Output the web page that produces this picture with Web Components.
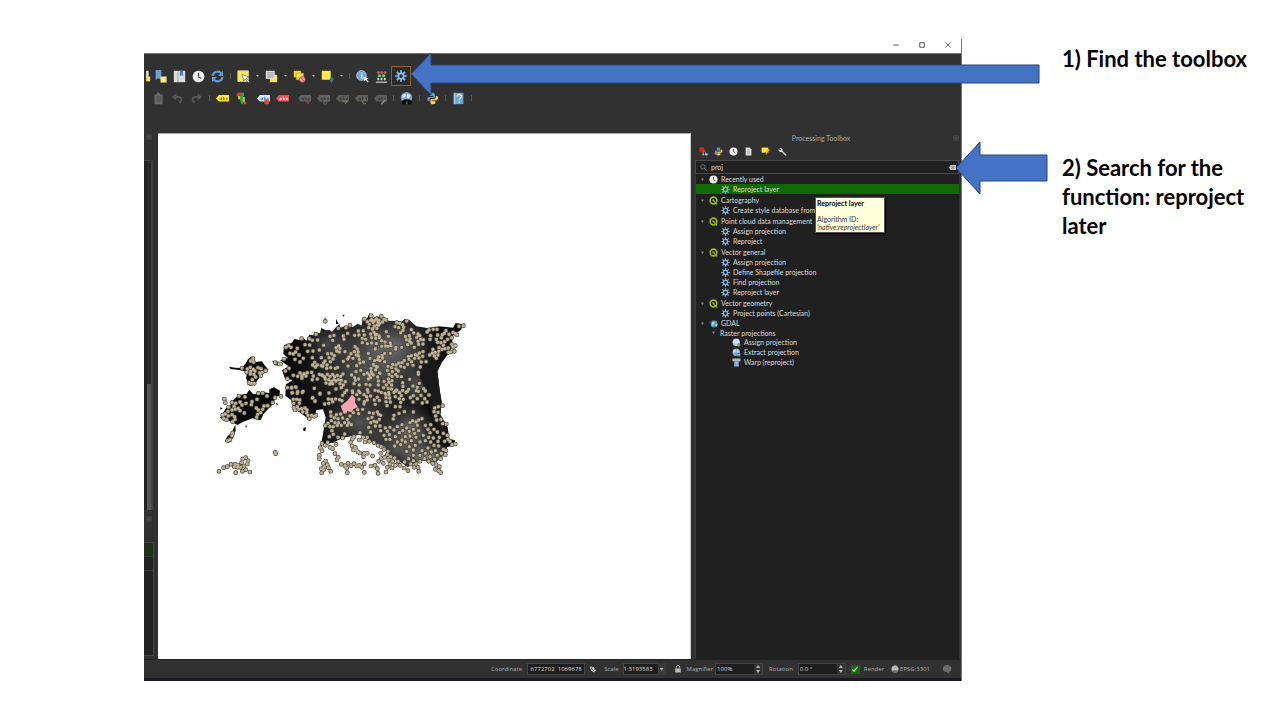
<!DOCTYPE html>
<html lang="en">
<head>
<meta charset="utf-8">
<title>Reprojecting a layer in QGIS</title>
<style>
html, body { margin: 0; background: #fff; }
body { font-family: "Open Sans", "Noto Sans", sans-serif; }
</style>
</head>
<body>
<tutorial-slide></tutorial-slide>
<script>
const GEAR = (c) => `<g stroke="${c}" stroke-width="2.2" fill="none"><circle cx="8" cy="8" r="3.6"/><path d="M8 4.6V.3M8 11.4v4.3M4.6 8H.3M11.4 8h4.300M5.600 5.600 2.500 2.500M10.400 10.400l3.100 3.100M10.400 5.600l3.100-3.100M5.600 10.400l-3.100 3.100"/></g>`;
const TAG = (fill, ink, extra = '') => `<path d="M0 8 3.500 3.700H16v8H3.500z" fill="${fill}"/><path d="M4.500 8.500a1 1 0 1 0 2 0 1 1 0 1 0-2 0M6.700 7v3M9 5.500v4.500M9 8.500a1 1 0 1 0 2 0 1 1 0 1 0-2 0M14.500 7.500h-1.500v2h1.500" fill="none" stroke="${ink}" stroke-width=".9"/>${extra}`;
const PYTHON = `<path d="M8 1C5 1 5 2 5 4v1h4v1H3C1 6 1 11 3 11h1.500V9c0-1 1-1.500 2-1.500h3c1 0 1.500-.5 1.500-1.500V3.500C11 1.500 10 1 8 1z" fill="#5a9bd5"/><path d="M8.500 15c3 0 3-1 3-3v-1h-4v-1H13c2.500 0 2.500-5 .5-5H12v2c0 1-1 1.500-2 1.500H7C6 8.500 5.500 9 5.500 10v2.500c0 2 1 2.500 3 2.500z" fill="#ffd83d"/>`;
const CLOCK = `<circle cx="8" cy="8" r="7.200" fill="#f0f0f0"/><path d="M8 3.500V8.500l3.500 2" fill="none" stroke="#444" stroke-width="1.500"/>`;
const SHAPES = {
  cut: `<path d="M10 1h3v9h-3z" fill="#ddd"/><path d="M10 8h5v6h-5z" fill="#f6d86b"/>`,
  bookmarkNew: `<path d="M2 0h7v12l-3.500-2L2 12z" fill="#6d9fd0"/><path d="M8 8h7.500v7.500H8z" fill="#ffe278"/><circle cx="11.700" cy="11.700" r="1.500" fill="#fff"/>`,
  book: `<path d="M1 1h14v14H1z" fill="#dcdcdc"/><path d="M6 1v14" stroke="#999"/><path d="M8.500 1h4v7l-2-1.500-2 1.500z" fill="#5683b4"/>`,
  clock: CLOCK,
  refresh: `<path d="M2 7.500A6 5.500 0 0 1 12.500 4M14 8.500A6 5.500 0 0 1 3.500 12" fill="none" stroke="#5c9bd8" stroke-width="2.800"/><path d="M14.800 1v6.300H8.500zM1.200 15V8.700h6.300z" fill="#5c9bd8"/>`,
  select: `<path d="M1 1h13v13H1z" fill="#ffe94a" stroke="#d9d9b0"/><path d="M6 5.500 14.500 8.500l-3 1.500 4 4.500-1.500 1-4-4.500-1.500 2.500z" fill="#fff" stroke="#555" stroke-width=".7"/>`,
  selectForm: `<path d="M6 6h9v9H6z" fill="#ffe94a"/><path d="M1 1h11v10H1z" fill="#ddd"/><path d="M2.500 3.500h8M2.500 6h8M2.500 8.500h8" stroke="#888"/>`,
  deselect: `<path d="M1 1h9v8H1z" fill="#f3d437"/><path d="M4 4h9v8H4z" fill="#ffe94a" stroke="#a98f20" stroke-width=".6"/><circle cx="11.500" cy="11.500" r="3.500" fill="#e9aaa6" stroke="#d94545" stroke-width="1.200"/><path d="m9.300 9.300 4.400 4.400" stroke="#d94545"/>`,
  selectLoc: `<path d="M1 1h11v11H1z" fill="#ffe94a"/><path d="M13 16c-2-3-2.500-3.500-2.500-4.700a2.500 2.500 0 0 1 5 0c0 1.200-.5 1.700-2.500 4.700z" fill="#4c7185"/>`,
  info: `<circle cx="6.800" cy="6.800" r="6.200" fill="#6fa6dc" stroke="#b9d4ec" stroke-width=".7"/><path d="M7 3v1.300M7 5.600v5" stroke="#fff" stroke-width="1.600"/><path d="m9 8 6.500 2.500-2.500 1 2.500 3-1 1-3-3.300-1.200 2z" fill="#fff"/>`,
  abacus: `<path d="M1 15h14" stroke="#ccc" stroke-width="1.500"/><path d="M1 3h14M2 7h12M2 11h12" stroke="#888" stroke-width=".6"/><path d="M3 1.500h2.500v3H3zM7 1.500h2.500v3H7zM11 1.500h2.500v3H11z" fill="#e25b5b"/><path d="M4 5.500h3v3H4zM9 5.500h3v3H9z" fill="#79db76"/><path d="M3 9.500h2v3H3zM7 9.500h2v3H7zM11 9.500h2v3h-2z" fill="#ddd"/>`,
  gear: GEAR('#8fc0ef'),
  gearSmall: GEAR('#87b0df'),
  paste: `<path d="M3 3h10v12H3zM6 1h4v3H6z" fill="#686868"/><path d="M5 6h6M5 8.500h6M5 11h6" stroke="#444"/>`,
  undo: `<path d="M3 6h6c5 0 5 6 1 7" fill="none" stroke="#5c5653" stroke-width="2"/><path d="M6.500 1.500v9L1 6z" fill="#5c5653"/>`,
  redo: `<path d="M13 6H7c-5 0-5 6-1 7" fill="none" stroke="#55595a" stroke-width="2"/><path d="M9.500 1.500v9L15 6z" fill="#55595a"/>`,
  label: TAG('#ffe83d', '#7a6d10'),
  diagram: `<path d="M2 4c0-4 5-4 6-2l-1 5H4z" fill="#e33"/><path d="M4 5h3v4H4z" fill="#efd62e"/><path d="M6 5h4v10H8l-2-5z" fill="#2fae3d"/><path d="M10 6h2v7h-2z" fill="#efd62e"/><path d="M11 12h3v3h-3z" fill="#e33"/><path d="M7 1h4v4H8z" fill="#3aa845"/>`,
  labelPin: TAG('#d6e9fb', '#4878aa', '<circle cx="12" cy="12" r="3.200" fill="#df4540"/>'),
  labelRed: TAG('#f6494d', '#fff'),
  tagPin: TAG('#646464', '#383838', '<circle cx="12" cy="12" r="2.500" fill="#6a4d4c"/>'),
  tagShow: TAG('#646460', '#383838', '<circle cx="10" cy="13" r="2" fill="none" stroke="#777"/>'),
  tagMove: TAG('#5e5e5a', '#383838', '<path d="M8 12h5m-2-2.500 3 2.500-3 2.500" fill="none" stroke="#909090"/>'),
  tagRotate: TAG('#5e5e5a', '#383838', '<path d="M13.500 10a2.500 2.500 0 1 0 0 4" fill="none" stroke="#909090"/>'),
  tagEdit: TAG('#5e5e5a', '#383838', '<path d="m9 15 5-5" stroke="#858585" stroke-width="2"/>'),
  metasearch: `<circle cx="8" cy="7" r="7" fill="#7fa4ca"/><path d="M3 4c3-3 5-1 4 1S4 8 3 7M9 2l4 2-2 4-3-1z" fill="#dce8f3"/><circle cx="5" cy="12.500" r="2.800" fill="#050505"/><circle cx="12" cy="12.500" r="2.800" fill="#050505"/><path d="M5 9h7v3H5z" fill="#111"/>`,
  python: PYTHON,
  help: `<path d="M3 1h11v14H3z" fill="#69a5dc"/><path d="M2 1h2v14H2z" fill="#aacdea"/><path d="M6.500 5.500c0-3 5-3 5 0 0 2-2.500 2-2.500 4.500M9 11.500v1.800" fill="none" stroke="#fff" stroke-width="1.400"/>`,
  models: `<circle cx="5" cy="5" r="4.800" fill="#d8201f"/><path d="M7 7l3-1 3 7M8 12v-4" stroke="#aaa" fill="none"/><circle cx="13" cy="13" r="2.500" fill="#9bbbd6"/><circle cx="7.500" cy="13" r="2" fill="#bbb"/>`,
  pythonGear: PYTHON + `<circle cx="4" cy="11" r="3" fill="#7094ba"/>`,
  results: `<path d="M3 1h7l3 3v11H3z" fill="#eee"/><path d="M5 5h6M5 7.500h6M5 10h6M5 12.500h6" stroke="#888"/>`,
  inPlace: `<path d="M1 1h12v9H1z" fill="#ffe53c"/><path d="m8 14 1-4 5-7 1.800 1.500-5 7z" fill="#ffd23a" stroke="#67531c" stroke-width=".7"/>`,
  wrench: `<path d="M2 2.500a4 4 0 0 1 6 4.500l7 6.500-2 2-6.500-7A4 4 0 0 1 1 4l3 2 1.500-1.500z" fill="#eee"/><path d="m9 9 5.500 5.500" stroke="#e4b640" stroke-width="1.500"/>`,
  search: `<circle cx="6.500" cy="6.500" r="5" fill="none" stroke="#9a9a9a" stroke-width="1.500"/><path d="m10 10 5 5" stroke="#9a9a9a" stroke-width="1.800"/>`,
  clear: `<path d="m0 8 4-5.500h12v11H4z" fill="#c6c6c6"/><path d="m6 5 6 6m0-6-6 6" stroke="#555" stroke-width="1.500"/>`,
  caret: `<path d="M3 5h10l-5 8z" fill="#828282"/>`,
  qgis: `<circle cx="8" cy="8" r="6" fill="none" stroke="#93bd1e" stroke-width="2.800"/><path d="m9 8 6.500 6-2.500 1.500L8 10z" fill="#7fb52a"/><path d="M6 6h3.500L8.800 7l1.500 1.700L9 10 7.200 8.500 6 9.500z" fill="#ee9a33"/>`,
  gdal: `<circle cx="9" cy="9" r="6.200" fill="#3f9dbb"/><path d="M6 5c4-2 5 1 3 3s0 3-2 4-3-5-1-7M12 8l3 1-1 4-3-1z" fill="#bfe0c8"/><path d="M0 5 8 1l-1 3-5 4z" fill="#444"/>`,
  globeAdd: `<circle cx="7.500" cy="7.500" r="6.500" fill="#b9d5e8"/><path d="M3 4c3-3 5 0 3 2s-3 3-4 1M9 2l4 5-4 1z" fill="#eaf4fa"/><path d="M9 12.500h6M12 9.500v6" stroke="#6fae58" stroke-width="2.500"/>`,
  globeGet: `<circle cx="7.500" cy="7.500" r="6.500" fill="#8baed6"/><path d="M3 4c3-3 5 0 3 2s-3 3-4 1M9 2l4 5-4 1z" fill="#dce9f8"/><path d="M8 9h7v6H8z" fill="#4779ba"/><path d="M9 12h5" stroke="#fff"/>`,
  warp: `<path d="M1 1h14v5H1z" fill="#c9d6df"/><path d="M2 3.500h12" stroke="#66747e"/><path d="M3.500 6h9c-1 3-1 5 0 9h-9c1-4 1-6 0-9z" fill="#93b7d2"/>`,
  extents: `<path d="m1 3 8 1 5 7-4 4-6-4z" fill="#c9c9c9"/><path d="m3 5 8 8M7 4l-3 6m8-2-5 5" stroke="#333"/>`,
  lock: `<path d="M4.500 7V4.500a3.500 3.500 0 0 1 7 0V7" fill="none" stroke="#bbb" stroke-width="1.800"/><path d="M2.500 7h11v8h-11z" fill="#bbb"/>`,
  crs: `<circle cx="8" cy="8" r="7" fill="#aaa"/><path d="M1 8h14M8 1c-5 4-5 10 0 14M8 1c5 4 5 10 0 14" fill="none" stroke="#ddd"/><path d="M2 11h12l-3 4H5z" fill="#666"/>`,
  bubble: `<path d="M8 1.500c9 0 9 10 3 11l1 3-4-2.500c-9 0-9-11.500 0-11.500z" fill="#6b6b6b"/>`,
  dock: `<path d="M2 2h12v12H2zM5 5h6v6H5zM5 5l6 6M11 5l-6 6" fill="none" stroke="#595959" stroke-width="1.500"/>`,
  minimise: `<path d="M1 8h14" stroke="#222" stroke-width="2"/>`,
  maximise: `<path d="M2 2h12v12H2z" fill="none" stroke="#222" stroke-width="2"/>`,
  close: `<path d="m1 1 14 14M15 1 1 15" stroke="#222" stroke-width="1.800"/>`
};

/* Base class: puts the markup returned by render() in an open shadow root. */
class View extends HTMLElement {
  connectedCallback() {
    if (!this.shadowRoot) this.attachShadow({ mode: 'open' });
    const t = document.createElement('template');
    t.innerHTML = this.render();
    this.shadowRoot.replaceChildren(t.content.cloneNode(true));
  }
}

customElements.define('q-icon', class extends View {
  render() {
    return `<style>:host{display:block;flex:none;width:var(--size,12px);height:var(--size,12px)}svg{display:block;width:100%;height:100%}</style>
      <svg viewBox="0 0 16 16" aria-hidden="true">${SHAPES[this.getAttribute('name')]}</svg>`;
  }
});

customElements.define('tool-button', class extends View {
  render() {
    const n = this.getAttribute('icon');
    return `<style>
      :host{display:block;flex:none;width:19px;height:20px}
      :host([narrow]){width:7px}
      :host([active]){width:20px}
      button{display:flex;align-items:center;justify-content:center;width:100%;height:100%;padding:0;margin:0;border:0;background:none;overflow:hidden;box-sizing:border-box;--size:13px}
      :host([narrow]) button{justify-content:flex-end}
      :host([active]) button{border:1px solid #94602a;background:#2b2b2b;--size:12px}
      :host([small]){width:15px;height:12px}
      :host([small]) button{--size:9px}
    </style><button type="button" aria-label="${n}"><q-icon name="${n}"></q-icon></button>`;
  }
});

customElements.define('tool-drop', class extends View {
  render() {
    return `<style>:host{display:block;flex:none;width:9px}button{display:flex;align-items:center;justify-content:center;width:100%;height:12px;border:0;padding:0;background:none}i{width:3px;height:2px;background:#bbb;clip-path:polygon(0 0,100% 0,50% 100%)}</style><button type="button" aria-label="more"><i></i></button>`;
  }
});

customElements.define('tool-sep', class extends View {
  render() {
    return `<style>:host{display:flex;flex:none;width:7px;justify-content:center}:host([thin]){width:3px;visibility:hidden}i{width:1px;height:6px;background:#565656}</style><i></i>`;
  }
});

customElements.define('title-bar', class extends View {
  render() {
    return `<style>:host{display:flex;justify-content:flex-end;height:14px;background:#fff;border-bottom:1px solid #777}
      button{width:26px;height:12px;padding:0;border:0;background:none;display:flex;align-items:center;justify-content:center;--size:6px}</style>
      ${['minimise', 'maximise', 'close'].map(n => `<button type="button" aria-label="${n}"><q-icon name="${n}"></q-icon></button>`).join('')}`;
  }
});

customElements.define('tool-bars', class extends View {
  render() {
    const b = (...names) => names.map(n => `<tool-button icon="${n}"></tool-button>`).join('');
    const s = '<tool-sep></tool-sep>', d = '<tool-drop></tool-drop>', thin = '<tool-sep thin></tool-sep>';
    return `<style>:host{display:block;height:67px;padding-top:12px;box-sizing:content-box}
      div{display:flex;align-items:center;height:20px}div+div{margin-top:2px;padding-left:5px}</style>
      <div><tool-button narrow icon="cut"></tool-button>${b('bookmarkNew', 'book', 'clock', 'refresh')}${s}${b('select')}${d}${b('selectForm')}${d}${b('deselect')}${d}${b('selectLoc')}${d}${s}${b('info', 'abacus')}<tool-button active icon="gear"></tool-button></div>
      <div>${b('paste', 'undo', 'redo')}${s}${b('label', 'diagram')}${thin}${b('labelPin', 'labelRed')}${thin}${b('tagPin', 'tagShow', 'tagMove', 'tagRotate', 'tagEdit')}${s}${b('metasearch')}${s}${b('python')}${s}${b('help')}${s}</div>`;
  }
});

customElements.define('side-docks', class extends View {
  render() {
    return `<style>:host{display:flex;flex-direction:column;flex:none;width:14px;--size:6px}
      header{height:27px;padding:1px 0 0 2px;box-sizing:border-box}
      .tree{flex:352;display:flex;background:#222;width:9px;border-right:2px solid #424242;border-top:1px solid #444;padding-left:2px;box-sizing:border-box}
      .bar{width:4px;margin-left:auto;background:#2a2a2a;display:flex;align-items:flex-end}
      .bar i{flex:1;height:36%;background:#565656}
      .mid{padding-top:6px;height:32px}
      .list{flex:113;width:9px;background:#222;border:1px solid #454545;border-left:0;margin-bottom:3px}
      .list i{display:block;height:13px;border-bottom:1px solid #3a3a3a}.list i:first-child{background:#1e3019}
    </style><header><q-icon name="dock"></q-icon></header><div class="tree"><div class="bar"><i></i></div></div>
    <header class="mid"><q-icon name="dock"></q-icon></header><div class="list"><i></i><i></i></div>`;
  }
});

/* Sample points as x,y pairs, each area with its own origin. */
const STATIONS = [
  [210, 15, '136,49 65,101 18,127 26,122 33,127 12,162 30,145 40,147 52,130 47,141 57,150 45,163 60,171 70,160 75,119 89,120 83,139 88,101 97,106 113,105 108,88 118,135 131,121 99,138 97,158 16,198 27,190 22,221 40,211 53,214 60,204 66,213 72,206 78,213 66,220 82,203 95,202 100,213 97,224 2,177 104,172 112,180 98,180 106,186 124,182 131,174 118,208 128,212 136,222 112,222 150,94 162,91 158,106 175,70 198,68 210,61 190,93 203,85 192,103 224,91 235,78 250,77 237,90 247,100 253,42 262,50 268,58 274,33 275,44 283,48 290,42 297,46 266,68 278,72 291,70 296,60 253,90 257,103 275,98 286,90 298,98 247,113 262,116 275,114 289,116 286,132 225,125 232,132 223,140 235,141 213,146 229,150 236,153 219,160 238,163 207,156 204,183 176,122 168,128 180,130 170,138 178,141 143,146 155,146 163,152 147,158 159,162 135,168 151,170 141,180 124,158 128,184 140,190 152,188 166,190 173,187 190,169 195,140 203,162 126,210 134,216 142,208 150,214 158,208 164,215 172,211 146,224 154,229 162,224 138,234 149,237 158,236 168,228 175,224 182,214 184,226 189,207 196,230 180,236 190,240 184,248 200,256 215,210 224,218 228,200 240,174 230,182 242,196 226,226 236,222 222,236 238,240 251,171 252,208 262,204 268,210 272,218 265,222 274,200 280,210 293,216 299,204 258,238 270,240 262,254 236,258 35,249 47,246 53,260 36,264 67,262 103,250 120,265 147,264 217,258 168,252 285,256 295,240 292,186 280,180 270,160 265,145 295,155'],
  [480, 15, '3,32 2,46 9,52 18,43 24,50 13,63 22,60 34,34 42,43 48,45 38,51 29,55 7,72 12,82 20,88 2,87 49,80 55,94 28,93 17,100 16,131 35,107 45,111 61,114 35,124 46,123 54,124 63,122 78,127 95,127 77,133 61,145 44,145 36,151 38,159 27,156 23,164 30,167 44,170 14,167 10,178 18,184 3,190 17,194 6,206 30,205 25,228 110,48 98,59 89,55 80,53 75,65 86,68 101,67 99,76 92,83 124,74 131,84 106,94 118,92 120,101 109,104 118,109 113,119 124,114 133,127 144,87 140,97 149,92 152,103 144,109 160,104 146,118 159,117 171,81 177,75 182,92 180,103 190,73 201,73 203,90 199,103 203,112 214,98 217,89 228,77 223,85 237,88 245,98 233,103 224,110 213,113 220,121 207,128 216,133 225,131 235,129 245,118 257,86 249,82 267,64 280,62 261,90 256,122 249,126 253,139 242,141 235,142 206,139 196,142 189,133 187,144 193,153 204,150 179,150 199,160 159,140 148,144 141,151 147,159 158,154 136,149 134,160 124,152 115,154 103,166 117,163 125,170 113,178 129,181 103,187 92,184 86,174 78,180 96,173 68,178 54,184 65,188 52,196 67,200 78,192 85,198 77,208 57,208 66,214 82,214 94,215 55,222 42,229 57,232 66,227 65,240 49,240 41,248 55,250 65,252 98,233 99,244 119,223 145,208 145,202 154,171 168,170 151,186 148,235 129,243 142,247 161,251 139,257 108,262 116,253 98,256 89,263 80,255 72,262 56,262 34,262 47,268'],
  [300, 270, '8,23 15,34 30,12 55,27 56,40 44,42 65,28 68,35 77,27 89,29 98,16 104,8 96,32 128,8 140,14 150,8 162,14 174,6 170,20 182,18 147,28 163,35 172,30 162,42 143,59 158,58 146,71 205,3 193,30 202,22 208,31 196,43 225,10 237,14 228,23 239,24 228,35 241,36 231,47 257,3 256,20 268,8 274,17 268,26 280,28 272,37 256,50 270,50 292,4 310,17 301,23 309,36 325,4 333,16 322,26 337,39 344,26 351,36 346,3 357,15 385,50 398,47 374,54 372,65 384,67 377,78 393,88 380,90 398,101 409,102 310,66 283,65 267,70 252,76 250,87 206,73 178,68 190,70 202,66 212,76 186,82 174,86 192,94 182,98 200,96 208,88 210,108 196,108 212,122 182,126 172,142 176,112 62,66 63,78 73,83 79,74 92,72 84,86 98,84 75,98 86,98 64,92 54,100 46,107 60,110 70,110 82,106 94,106 104,98 112,88 116,98 124,104 112,106 120,78 130,68 106,66 66,122 70,133 58,140 84,142 98,144 104,132 132,140 150,128 226,114 240,112 232,124 222,136 238,134 228,148 240,148 252,120 262,110 276,104 268,128 256,140 278,122 290,114 300,98 308,92 318,96 326,90 336,86 322,106 298,124 310,118 314,130 300,138 286,140 326,122 346,106 354,118 362,104 340,136 360,128 372,118 382,126 356,142 370,144 276,150 262,156 272,164 254,168 286,156 304,152 318,142 330,156 316,166 298,170 290,184 310,180 346,152 362,156 372,166 354,174 384,154 388,142 400,130 412,136 414,148 420,154 404,154 386,168 400,178 408,182 394,190 406,194 376,182 364,186 382,196 392,206 374,208 360,200 346,190 336,182 330,196 344,206 356,214 368,220 378,224 388,230 386,242 392,248 376,238 436,162 426,164 330,214 318,222 310,212 302,222 312,232 324,232 326,244 294,242 282,234 270,226 284,216 296,206 310,196 264,214 254,204 242,200 232,194 224,202 236,210 248,214 256,226 246,234 232,232 228,246 240,222 214,206 206,214 220,220 212,190 222,178 234,184 195,226 202,236 204,250 183,228 188,198 172,190 163,190 160,200 150,189 139,180 130,180 126,168 122,157 136,172 144,186 148,150 165,156 160,142 178,154 192,158 204,166 214,170 53,157 46,166 36,160 31,173 36,182 28,196 28,206 60,172 68,176 75,191 85,202 81,209 78,163 127,147 47,213 40,220 52,224 43,230 34,236 55,233 62,244 41,240 35,249 94,223 105,227 114,220 110,234 123,227 132,221 140,228 148,226 155,232 163,221 112,248 163,247'],
  [0, 120, '129,56 122,63 131,66 96,84 112,87 121,82 130,88 110,97 122,94 135,93 144,83 153,86 149,99 132,103 121,102 157,97 167,92 152,107 137,111 127,119 117,128 124,131 133,130 196,68 208,72 87,168 105,171 145,160 158,159 171,168 141,178 126,185 124,194 139,204 145,210 152,218 143,223 140,232 158,208 162,198 173,197 188,188 195,173 213,169 43,177 46,188 66,187 77,190 90,186 96,195 108,190 72,199 56,201 66,210 54,214 76,208 85,205 90,212 103,219 38,225 46,222 41,235 50,239 55,228 66,224 74,230 68,245 75,238 68,279 66,287 60,299 53,302 196,337 197,341 27,394 41,383 52,380 63,373 75,373 84,375 95,368 98,357 107,353 114,362 112,372 102,378 92,382 83,382 73,381 97,394 107,389 120,396 77,398 232,143 245,142 258,142 247,158 262,160 279,154 313,145 307,174 315,183 250,178 260,178 269,180 251,190 268,190 252,203 262,200 255,210 266,208 275,206 285,204 291,210 278,216 290,218 294,226 305,226 298,236 313,229 318,226']
];

customElements.define('map-canvas', class extends View {
  render() {
    const dots = STATIONS.map(([ox, oy, list]) => list.split(' ').map(pair => {
      const [x, y] = pair.split(',').map(Number);
      return `M${x + ox} ${y + oy}h.01`;
    }).join('')).join('');
    const land = 'M222 135l23-6 8-12 15 3 6-9 16 11 8-18 12 2 3-9 17 3 4-16 14 7 11-1 7 6 12-14 10-10 3 11 18-6 20 4 14-10 12 6 3-24 8 12 13-26 4 18 17-8 10 2 8 9 16 2 18 1 18 6 14-12 15 4 20 18 32 5 36-5 22 2 20 2 8-14 22 4-6 17-14 8-13 12 2 26-9 20-25 34-12 24 7 56 6 36-4 38 22 38 5 36 16 2 3 14-26 8-12 26-20 18-50-4-36 20-18-14-36-20-14-28-44-16-32-20-50 9-30 15-36 4 6-30 8-50-8-24-20 2-4 18-22 7-22-17-20-10-8-28-17-13 2-34 20-12-24-8-8-22 20-12-26-18 24-7-14-12z';
    return `<style>:host{display:block;flex:1;min-width:0;background:#fff;border-top:1px solid #aaa;border-right:1px solid #ccc;box-sizing:border-box;padding:166px 0 0 52px;overflow:hidden}svg{display:block;width:270px;height:185px}</style>
    <svg viewBox="0 0 810 555" role="img" aria-label="Map of Estonia with sample points">
      <defs><radialGradient id="g"><stop offset="0" stop-color="#aaa" stop-opacity=".8"/><stop offset="1" stop-color="#777" stop-opacity="0"/></radialGradient>
      <clipPath id="c"><path d="${land}"/></clipPath></defs>
      <path d="${land}" fill="#0d0d0d"/>
      <g clip-path="url(#c)" fill="url(#g)"><ellipse cx="500" cy="150" rx="220" ry="170" opacity=".5"/><ellipse cx="560" cy="140" rx="100" ry="100" opacity=".5"/><ellipse cx="480" cy="230" rx="220" ry="150" opacity=".4"/><ellipse cx="600" cy="390" rx="80" ry="90" opacity=".8"/><ellipse cx="450" cy="370" rx="140" ry="100" opacity=".55"/><ellipse cx="655" cy="475" rx="90" ry="50"/><ellipse cx="560" cy="450" rx="160" ry="90" opacity=".5"/><ellipse cx="620" cy="260" rx="45" ry="60" opacity=".5"/><ellipse cx="350" cy="130" rx="80" ry="60" opacity=".35"/><path d="M630 190h80v230l-40-60-15-70-25-60z" fill="#1a1a1a"/></g>
      <g fill="#0b0b0b"><path d="M57 200l18 3 22 1 10-14 7-12 10-9 12 17 20-2 8 12 12 14-14 9-14 14-16 22-14 2-10-24 4-18-30-6-20-2z"/>
      <path d="M178 268l14-6 18 10-2 16-18 4-12-12zM186 182l24 4 6 12-22-2z"/>
      <path d="M30 354l18-30 10-4 12-20 14-14 26-5 8-12 12 14 28-7 24 4 12 15-2 14-18 18-14 16-8 18-24-6-28 10-18 10-22-12z"/>
      <path d="M76 374l1 18-8 22-12 14-12-4 6-14 14-12 6-14zM280 384l8-2-2 12-6-2zM106 376l5 2-3 6zM197 308l8 4-4 4zM240 202l30 20-40 6zM30 322l8 3-6 4zM398 43l6 4-5 3zM212 120l5 3zM345 50l3 10h-5zM378 56l8 16h-8z"/></g>
      <path d="M374 430l24-14 36 8 34 8 30 20 26 26-14 12-40-4-34-14-10-20-30-10z" fill="#fff"/>
      <path d="${dots}" fill="none" stroke="#4a453a" stroke-width="14" stroke-linecap="round"/>
      <path d="${dots}" fill="none" stroke="#bcb196" stroke-width="10" stroke-linecap="round"/>
      <path d="M392 318l20-16 14-18 10 10-1 14 9 14-14 5-5 10-13-4-11 8z" fill="#f5a4b2"/>
    </svg>`;
  }
});

const TREE = [
  ['clock', 'Recently used', ['Reproject layer']],
  ['qgis', 'Cartography', ['Create style database from project']],
  ['qgis', 'Point cloud data management', ['Assign projection', 'Reproject']],
  ['qgis', 'Vector general', ['Assign projection', 'Define Shapefile projection', 'Find projection', 'Reproject layer']],
  ['qgis', 'Vector geometry', ['Project points (Cartesian)']]
];

customElements.define('algorithm-tip', class extends View {
  render() {
    return `<style>:host{display:block;background:#ffffdc;color:#333;border:1px solid #555;box-shadow:1px 1px 1px #000;padding:1px;font:7px/8px Lato,sans-serif;white-space:nowrap;box-sizing:border-box}
      b,p,em{display:block;margin:0}b{color:#000;margin-bottom:8px}</style>
      <b>Reproject layer</b><p>Algorithm ID:</p><em>'native:reprojectlayer'</em>`;
  }
});

customElements.define('algorithm-tree', class extends View {
  render() {
    const item = (icon, t) => `<li class="row item"><q-icon name="${icon}"></q-icon><span>${t}</span></li>`;
    const head = (icon, t) => `<div class="row"><q-icon class="caret" name="caret"></q-icon><q-icon name="${icon}"></q-icon><span>${t}</span></div>`;
    return `<style>:host{display:block;flex:1;background:#202020;color:#ddd;font:7px/10px Lato,sans-serif;position:relative;border-left:1px solid #3c3c3c}
      ul{list-style:none;margin:0;padding:0}
      .row{display:flex;align-items:center;height:10px;gap:3px;padding-left:4px;--size:9px;white-space:nowrap}
      .caret{--size:5px;margin-right:1px}
      .group+.group{margin-top:1px}
      .group:last-child{margin-top:0}
      .item{padding-left:25px}
      .group:first-child .item{background:#0f6b00}
      .sub .row{padding-left:15px}.sub .row.item{padding-left:36px}.sub>.row{height:9px}
      algorithm-tip{position:absolute;left:119px;top:23px;z-index:1;width:70px;height:36px}
    </style><ul>
      ${TREE.map(([i, t, kids]) => `<li class="group">${head(i, t)}<ul>${kids.map(k => item('gearSmall', k)).join('')}</ul></li>`).join('')}
      <li class="group">${head('gdal', 'GDAL')}<div class="sub"><div class="row"><q-icon class="caret" name="caret"></q-icon><span>Raster projections</span></div>
      <ul>${item('globeAdd', 'Assign projection')}${item('globeGet', 'Extract projection')}${item('warp', 'Warp (reproject)')}</ul></div></li>
    </ul><algorithm-tip></algorithm-tip>`;
  }
});

customElements.define('processing-toolbox', class extends View {
  render() {
    const b = n => `<tool-button small icon="${n}"></tool-button>`;
    return `<style>:host{display:flex;flex-direction:column;flex:none;width:270px;box-sizing:border-box;padding:0 2px 0 4px;color:#aaa}
      header{display:flex;align-items:center;height:10px;font:7px/10px Lato,sans-serif;--size:6px}
      h2{flex:1;margin:0 6px 0 0;text-align:center;font:inherit}
      nav{display:flex;align-items:center;height:16px;padding-left:1px}
      tool-sep{width:2px;visibility:hidden}
      .find{display:flex;align-items:center;gap:4px;height:12px;padding:0 2px 0 4px;margin-top:1px;border:1px solid #494949;background:#202020;--size:7px}
      input{flex:1;min-width:0;height:10px;padding:0;border:0;outline:0;background:none;color:#ddd;font:7px Lato,sans-serif}
    </style><header><h2>Processing Toolbox</h2><q-icon name="dock"></q-icon></header>
    <nav>${b('models')}${b('pythonGear')}${b('clock')}${b('results')}<tool-sep></tool-sep>${b('inPlace')}<tool-sep></tool-sep>${b('wrench')}</nav>
    <div class="find"><q-icon name="search"></q-icon><input type="text" value="proj" aria-label="Search"><q-icon name="clear"></q-icon></div>
    <algorithm-tree></algorithm-tree>`;
  }
});

customElements.define('spin-field', class extends View {
  render() {
    return `<style>:host{display:flex;flex:none;width:48px;height:12px;box-sizing:border-box;border:1px solid #444;background:#1e1e1e}
      input{flex:1;min-width:0;padding:0 1px;border:0;background:none;color:#ddd;font:6px "Open Sans",sans-serif}
      div{display:flex;flex-direction:column;justify-content:center;align-items:center;gap:2px;width:8px;background:#333}
      button{width:4px;height:3px;border:0;padding:0;background:#bbb;clip-path:polygon(50% 0,100% 100%,0 100%)}button+button{clip-path:polygon(0 0,100% 0,50% 100%)}</style>
      <input type="text" value="${this.getAttribute('value')}" aria-label="${this.getAttribute('label')}"><div><button type="button" aria-label="up"></button><button type="button" aria-label="down"></button></div>`;
  }
});

customElements.define('status-bar', class extends View {
  render() {
    return `<style>:host{display:flex;align-items:center;justify-content:flex-end;height:18px;padding-right:9px;font-size:6px;color:#aaa;border-bottom:3px solid #1d1a1f;border-top:1px solid #222;white-space:nowrap;--size:8px}
      label,span{flex:none}
      #xy{width:58px;margin:0 4px 0 5px;text-align:center}
      #xy,select{height:12px;box-sizing:border-box;border:1px solid #444;background:#1e1e1e;color:#ddd;font:6px "Open Sans",sans-serif;padding:0;border-radius:0}
      .combo{display:flex;position:relative;margin:0 8px 0 4px}
      select{appearance:none;width:43px}
      .combo i{position:absolute;right:0;top:0;width:8px;height:12px;background:#3a3a3a;pointer-events:none}
      .combo i::after{content:"";position:absolute;left:2px;top:5px;width:4px;height:3px;background:#aaa;clip-path:polygon(0 0,100% 0,50% 100%)}
      .scale{margin-left:7px}.mag{margin:0 2px 0 5px}.rot{margin:0 5px 0 6px}
      #render{appearance:none;width:9px;height:9px;margin:0 4px 0 5px;background:#0d7000;display:grid;place-items:center}
      #render:checked::before{content:"";width:5px;height:2px;border:solid #fff;border-width:0 0 1px 1px;rotate:-48deg;margin-bottom:2px}
      .crs{margin:0 1px 0 7px}.msg{--size:10px;margin-left:12px}
    </style><label for="xy">Coordinate</label><input id="xy" type="text" value="6772702  1069678"><q-icon name="extents"></q-icon>
    <label class="scale" for="sc">Scale</label><div class="combo"><select id="sc"><option>1:3193583</option></select><i></i></div><q-icon name="lock"></q-icon>
    <span class="mag">Magnifier</span><spin-field label="Magnifier" value="100%"></spin-field><span class="rot">Rotation</span><spin-field label="Rotation" value="0.0 °"></spin-field>
    <input id="render" type="checkbox" checked><label for="render">Render</label><q-icon class="crs" name="crs"></q-icon><span>EPSG:3301</span><q-icon class="msg" name="bubble"></q-icon>`;
  }
});

customElements.define('qgis-window', class extends View {
  render() {
    return `<style>:host{display:flex;flex-direction:column;background:#313131;border-right:1px solid #777;box-sizing:border-box;min-width:0}main{flex:1;display:flex;min-height:0}</style>
      <title-bar></title-bar><tool-bars></tool-bars>
      <main><side-docks></side-docks><map-canvas></map-canvas><processing-toolbox></processing-toolbox></main>
      <status-bar></status-bar>`;
  }
});

customElements.define('callout-arrow', class extends View {
  render() {
    const [w, h, head, t] = ['length', 'height', 'head', 'shaft'].map(a => +this.getAttribute(a));
    const a = (h - t) / 2;
    return `<style>:host{display:block}svg{display:block}</style><svg width="${w}" height="${h}" aria-hidden="true"><path d="M1 ${h / 2}L${head} 1V${a}H${w - 1}V${h - a}H${head}V${h - 1}z" fill="#4472c4" stroke="#27457c"/></svg>`;
  }
});

customElements.define('step-note', class extends View {
  render() {
    return `<style>:host{display:block;font:bold 22px/29px Lato,sans-serif;color:#000}p{margin:0}</style><p><slot></slot></p>`;
  }
});

customElements.define('tutorial-slide', class extends View {
  render() {
    return `<style>:host{display:grid;position:relative;grid-template-columns:minmax(0,1fr) 192px;column-gap:100px;box-sizing:border-box;min-height:100vh;padding:39px 26px 39px 11.25%}
      aside{display:flex;flex-direction:column;gap:80px;padding-top:5px}
      callout-arrow{position:absolute}
      .one{left:410px;top:52px}.two{left:955px;top:141px}
    </style><qgis-window></qgis-window>
    <aside><step-note>1) Find the toolbox</step-note><step-note>2) Search for the function: reproject later</step-note></aside>
    <callout-arrow class="one" length="630" height="44" head="21" shaft="18"></callout-arrow>
    <callout-arrow class="two" length="93" height="54" head="25" shaft="26"></callout-arrow>`;
  }
});
</script>
</body>
</html>
